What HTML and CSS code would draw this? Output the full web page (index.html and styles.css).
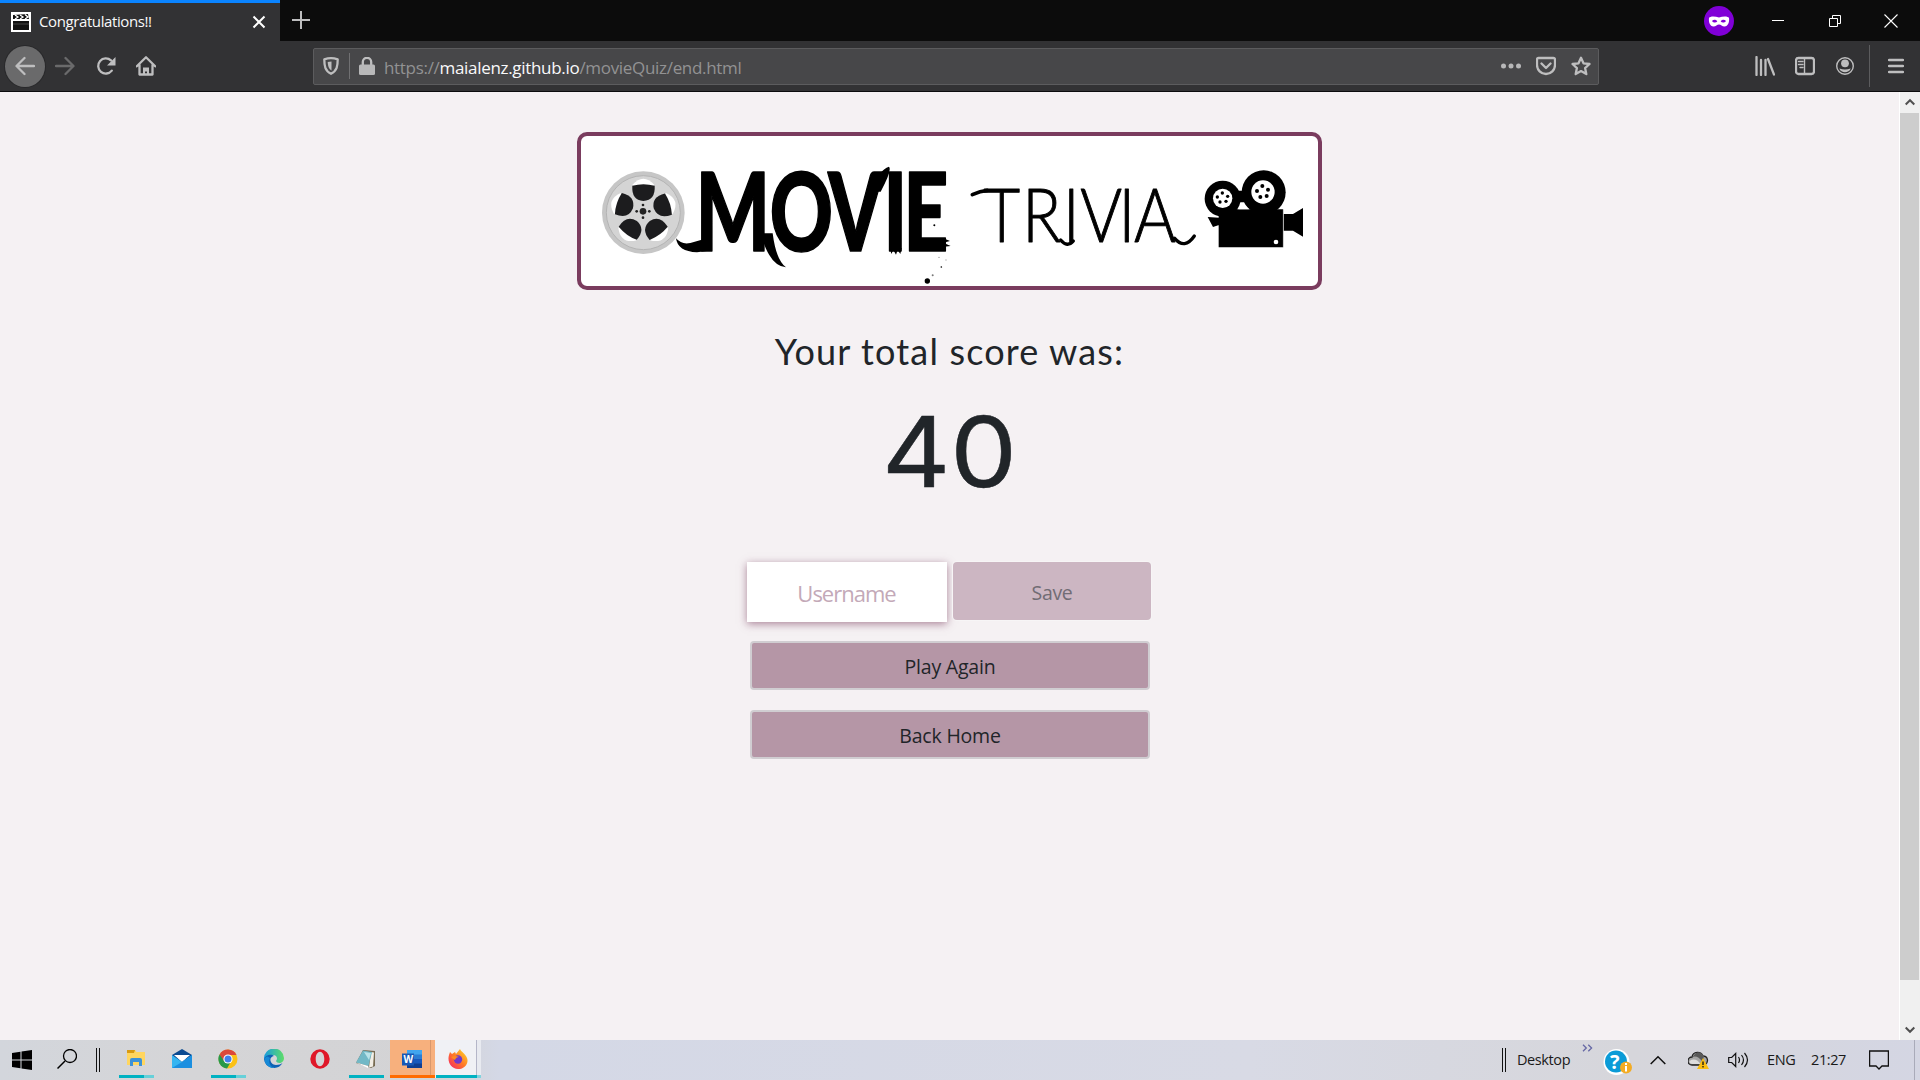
FILE: index.html
```html
<!DOCTYPE html>
<html lang="en">
<head>
<meta charset="utf-8">
<title>Congratulations!!</title>
<link rel="stylesheet" href="styles.css">
</head>
<body>
<header class="tabbar">
  <div class="tab">
    <svg class="favicon" width="20" height="20" viewBox="0 0 20 20"><rect width="20" height="20" fill="#fff"/><path d="M2 9h16v9H2zM2 3l15-1 1 5H2z" fill="#111"/><path d="M4 3l3 2-3 2M9 3l3 2-3 2M14 2.5l3 2.5-3 2" stroke="#fff" stroke-width="1.3" fill="none"/><path d="M2 12h16" stroke="#444"/></svg>
    <span class="tab-title">Congratulations!!</span>
    <svg class="tab-close" width="14" height="14" viewBox="0 0 14 14"><path d="M1.5 1.5l11 11M12.500 1.500l-11 11" stroke="#fff" stroke-width="2"/></svg>
  </div>
  <svg class="newtab" width="18" height="18" viewBox="0 0 18 18"><path d="M9 0v18M0 9h18" stroke="#bebebf" stroke-width="2"/></svg>
  <div class="window-controls">
    <svg width="30" height="30" viewBox="0 0 30 30"><circle cx="15" cy="15" r="15" fill="#8000d7"/><path fill-rule="evenodd" fill="#fff" d="M5 12c1-2 6-2 10-.4 4-1.600 9-1.600 10 .4.600 4-1 8.500-4.500 8.500-2.500 0-3.500-2-5.500-2s-3 2-5.500 2C6 20.500 4.400 16 5 12zm3 3c1.500 2 4 2 5.300.4-1.300-2-3.800-2-5.300-.4zm8.700.4c1.300 1.600 3.800 1.600 5.300-.4-1.500-1.600-4-1.600-5.300.4z"/></svg>
    <svg class="min" width="12" height="12" viewBox="0 0 12 12"><path d="M0 5.500h12" stroke="#fff"/></svg>
    <svg class="restore" width="12" height="12" viewBox="0 0 12 12"><path d="M.5 3.500h8v8h-8zM3.500 3.500v-3h8v8h-3" fill="none" stroke="#fff"/></svg>
    <svg class="close" width="14" height="14" viewBox="0 0 14 14"><path d="M.5.5l13 13M13.500.5l-13 13" stroke="#fff" stroke-width="1.100"/></svg>
  </div>
</header>
<nav class="toolbar">
  <div class="nav-buttons">
    <span class="nav-button back"><svg width="20" height="20" viewBox="0 0 20 20"><path d="M19 10H2M9.500 2L1.500 10l8 8" class="line"/></svg></span>
    <span class="nav-button forward"><svg width="20" height="20" viewBox="0 0 20 20"><path d="M1 10h17M10.500 2l8 8-8 8" class="line"/></svg></span>
    <span class="nav-button"><svg width="20" height="20" viewBox="0 0 20 20"><path d="M15.800 14.600A7.600 7.600 0 1 1 15 4.400" class="line"/><path d="M19.500 1v8.500H11z" fill="#bebebf"/></svg></span>
    <span class="nav-button"><svg width="20" height="20" viewBox="0 0 20 20"><path d="M.8 10.300L10 1.300l9.200 9M3.500 9v9.500h13V9" class="line"/><path d="M7 18v-6.500h6V18h-2v-2.500H9V18z" fill="#bebebf"/></svg></span>
  </div>
  <div class="urlbar">
    <svg width="16" height="18" viewBox="0 0 16 18"><path d="M8 1.200c2.500 0 4.500.4 6.700 1.100 0 6.500-.6 11.700-6.700 14.500C1.900 14 1.300 8.800 1.300 2.300 3.500 1.600 5.500 1.200 8 1.200z" class="line"/><path d="M8.500 4.500v9C5.500 11.500 5 9 4.700 5z" fill="#bebebf"/></svg>
    <i class="url-separator"></i>
    <svg width="16" height="18" viewBox="0 0 16 18"><path d="M3.800 9V5a4.200 4.200 0 0 1 8.400 0v4" class="line"/><rect y="7.500" width="16" height="10.500" rx="1.500" fill="#b8b8b9"/></svg>
    <span class="url">https://<b>maialenz.github.io</b>/movieQuiz/end.html</span>
    <div class="url-actions">
      <svg width="20" height="20" viewBox="0 0 20 20"><g fill="#b8b8b9"><circle cx="2.500" cy="10" r="2.500"/><circle cx="10" cy="10" r="2.500"/><circle cx="17.500" cy="10" r="2.500"/></g></svg>
      <svg width="20" height="20" viewBox="0 0 20 20"><path d="M2.500 2h15q1.500 0 1.500 1.500V9A9 9 0 0 1 1 9V3.500Q1 2 2.500 2zM5.500 7.500L10 12l4.500-4.500" class="line"/></svg>
      <svg width="20" height="20" viewBox="0 0 20 20"><path d="M10 1.800l2.500 5.500 6 .7-4.400 4.100 1.200 6-5.300-3-5.300 3 1.200-6L1.500 8l6-.7z" class="line"/></svg>
    </div>
  </div>
  <div class="tools">
    <svg width="20" height="20" viewBox="0 0 20 20"><path d="M1.500 1v18M6 4v15M10.500 4v15M13 3l6 15.500" class="line"/></svg>
    <svg width="20" height="20" viewBox="0 0 20 20"><rect x="1" y="2" width="18" height="16" rx="2.500" class="line"/><path d="M9.500 2v16" class="line thin"/><path d="M3.500 5.500H8M3.500 8.500H8M5 11.500h3" class="line thin"/></svg>
    <svg width="20" height="20" viewBox="0 0 20 20"><circle cx="10" cy="10" r="8.300" class="line thin"/><circle cx="10" cy="7.300" r="3.900" fill="#bebebf"/><path d="M4.300 12.500Q10 14.500 15.700 12.500C14 17.500 6 17.500 4.300 12.500z" fill="#bebebf"/></svg>
    <i class="tool-separator"></i>
    <svg width="16" height="20" viewBox="0 0 16 20"><path d="M1 4h14M1 10h14M1 16h14" class="line"/></svg>
  </div>
</nav>
<div class="viewport">
  <main class="page">
    <div class="logo">
      <svg width="737" height="150" viewBox="581 136 737 150" role="img">
        <g transform="translate(570 120) scale(.33333)">
          <circle cx="220" cy="278" r="124" fill="#c6c6c6"/><circle cx="220" cy="278" r="111" fill="#d4d4d4" stroke="#b4b4b4" stroke-width="3"/>
          <g id="holes">
            <g id="hole"><path d="M187 194q33-36 66 0l-10 18h-46z" fill="#fff"/><path d="M187 197q33-9 67 0 3 43-34 46-36-3-33-46z" fill="#1c1c1e"/></g>
            <use href="#hole" transform="rotate(72 220 276)"/><use href="#hole" transform="rotate(144 220 276)"/><use href="#hole" transform="rotate(216 220 276)"/><use href="#hole" transform="rotate(288 220 276)"/>
          </g>
          <g fill="#222"><circle cx="219" cy="274" r="10"/><circle cx="219" cy="255" r="4"/><circle cx="219" cy="293" r="4"/><circle cx="200" cy="274" r="4"/><circle cx="238" cy="274" r="4"/></g>
          <path d="M318 355q17 20 43 14l50-14 0 38-30 4q-58-2-63-42zM572 340l36 0q10 80 40 102-50-4-76-102zM893 215q35-65 64-75 10 10-25 75z"/>
          <text class="brush" transform="scale(.72 1)" x="524 832 1076 1306 1390" y="393">MOVIE</text>
          <path d="M1120 355l20 8-20 5 22 10-32 4zM960 385l4 17 6-12 8 14 5-14 8 12 4-18z"/>
          <g><circle cx="1072" cy="483" r="8"/><circle cx="1088" cy="466" r="3" fill="#777"/><circle cx="1114" cy="441" r="2.500"/><circle cx="1107" cy="412" r="2" fill="#888"/><circle cx="1093" cy="316" r="3"/><circle cx="1128" cy="420" r="2" fill="#aaa"/></g>
        </g>
        <g transform="translate(940 120) scale(.33333)">
          <path d="M97 224q24-11 45-13" fill="none" stroke="#000" stroke-width="11" stroke-linecap="round"/>
          <path d="M362 360q20 24 38 3M704 355q30 35 59-7" fill="none" stroke="#000" stroke-width="10" stroke-linecap="round"/>
          <text class="pen" transform="scale(.85 1)" x="153 290 434 495 630 685" y="367">TRIVIA</text>
          <circle cx="848" cy="236" r="54"/><circle cx="971" cy="217" r="66"/>
          <path d="M885 212h35v35h-35zM836 268h193v114H836zM803 291l34 2v22l-18 6zM1031 282h28l30-18v86l-30-18h-28z"/>
          <path d="M895 268l14-18 18 18z" fill="#fff"/>
          <path d="M1030 268v114" stroke="#aaa" stroke-width="2"/>
          <circle cx="848" cy="235" r="29" fill="#fff"/><circle cx="969" cy="216" r="35" fill="#fff"/><circle cx="1008" cy="366" r="7" fill="#fff"/>
          <circle cx="847" cy="219" r="5"/><circle cx="863" cy="229" r="5"/><circle cx="858" cy="244" r="5"/><circle cx="840" cy="246" r="5"/><circle cx="832" cy="231" r="5"/>
          <circle cx="967" cy="198" r="6"/><circle cx="984" cy="209" r="6"/><circle cx="980" cy="228" r="6"/><circle cx="961" cy="231" r="6"/><circle cx="951" cy="213" r="6"/>
        </g>
      </svg>
    </div>
    <h1 class="heading">Your total score was:</h1>
    <div class="score">40</div>
    <form class="score-form">
      <div class="save-row">
        <div class="username">Username</div>
        <div class="save">Save</div>
      </div>
      <div class="button again">Play Again</div>
      <div class="button home">Back Home</div>
    </form>
  </main>
  <div class="scrollbar">
    <svg width="10" height="8" viewBox="0 0 10 8"><path d="M.7 6.500L5 2.200l4.300 4.300" fill="none" stroke="#505050" stroke-width="2"/></svg>
    <i class="thumb"></i>
    <svg width="10" height="8" viewBox="0 0 10 8"><path d="M.7 1.500L5 5.800l4.300-4.300" fill="none" stroke="#505050" stroke-width="2"/></svg>
  </div>
</div>
<footer class="taskbar">
  <span class="cell start"><svg width="20" height="20" viewBox="0 0 20 20"><path d="M0 3l8.500-1.200v7.700H0zM9.500 1.600L20 0v9.500H9.500zM0 10.500h8.500v7.700L0 17zM9.500 10.500H20V20L9.500 18.400z"/></svg></span>
  <span class="cell"><svg width="20" height="20" viewBox="0 0 20 20"><path d="M8 12L.5 19.500" stroke="#000" stroke-width="1.500"/><circle cx="13" cy="7" r="6.500" fill="none" stroke="#000" stroke-width="1.300"/></svg></span>
  <i class="grip"></i>
  <div class="apps">
    <span class="cell running stacked"><svg width="20" height="20" viewBox="0 0 20 20"><path d="M1 1h8l1.500 2H19v13H1z" fill="#ffd660"/><path d="M1 1h8l-1 3H1z" fill="#d99b12"/><path d="M4 17v-6q0-2 2-2h8q2 0 2 2v6h-3v-4H7v4z" fill="#3c91d8"/></svg></span>
    <span class="cell"><svg width="20" height="20" viewBox="0 0 20 20"><path d="M0 6l10-6 10 6v13H0z" fill="#0a4a91"/><path d="M2 6h16l-8 7z" fill="#fff"/><path d="M0 6l10 7 10-7v13H0z" fill="#35b5f1"/><path d="M0 19l10-6 10-7v13z" fill="#1b8fe0"/></svg></span>
    <span class="cell running stacked"><svg width="20" height="20" viewBox="0 0 20 20"><circle cx="10" cy="10" r="9.500" fill="#fbc116"/><path d="M10 10L1.500 5.500A9.500 9.500 0 0 0 9 19.500l4-7z" fill="#26994a"/><path d="M1.600 5.500A9.500 9.500 0 0 1 18.500 6H10l-4 6z" fill="#dc483c"/><circle cx="10" cy="10" r="4.600" fill="#fff"/><circle cx="10" cy="10" r="3.500" fill="#427fed"/></svg></span>
    <span class="cell"><svg width="20" height="20" viewBox="0 0 20 20"><defs><linearGradient id="edge"><stop stop-color="#189be0"/><stop offset="1" stop-color="#5fdd67"/></linearGradient></defs><path d="M0 10A10 10 0 0 1 20 9c0 6-7 6-8 3 2-2 1-6-3-6-4 0-6 2-9 4z" fill="url(#edge)"/><path d="M0 10c2-5 8-5 10-3-6 1-4 9 2 9 3 0 5-1 6.500-2A10 10 0 0 1 0 10z" fill="#0d63b5"/><path d="M6 9c-2 4 0 9 5 10-6 1-12-5-10-10q2-3 5 0z" fill="#1689d6"/></svg></span>
    <span class="cell"><svg width="20" height="20" viewBox="0 0 20 20"><path fill="#df1829" fill-rule="evenodd" d="M10 .3a9.700 9.700 0 1 0 0 19.400A9.700 9.700 0 1 0 10 .3zm0 2.500c2.300 0 4.300 3 4.300 7.200s-2 7.200-4.300 7.200S5.700 14.200 5.700 10 7.700 2.800 10 2.800z"/></svg></span>
    <span class="cell running"><svg width="20" height="20" viewBox="0 0 20 20"><path d="M7 1l12 1v15l-4 2L0 14z" fill="#776b52"/><path d="M15 3l3 .5-1 14-4 1z" fill="#f2eee5"/><path d="M7 1.500L16 3l-3.500 14L0 13.500z" fill="#72b8c6"/><path d="M8 3l7 1-2 7z" fill="#b9e2e8"/><path d="M0 13.500L12.500 17l-.5 2z" fill="#fff"/></svg></span>
    <span class="cell word"><svg width="20" height="20" viewBox="0 0 20 20"><path d="M5 1h15v5H5z" fill="#41a5ee"/><path d="M5 5.500h15V10H5z" fill="#2b7cd3"/><path d="M5 10h15v5H5z" fill="#185abd"/><path d="M5 14.500h15V19H5z" fill="#103f91"/><path d="M0 4.500h12v12H0z" fill="#1858b5"/><text x="1.500" y="14" class="word-mark" textLength="9">W</text></svg></span>
    <span class="cell running stacked firefox"><svg width="20" height="20" viewBox="0 0 20 20"><defs><linearGradient id="fire" x1="1" y1="0" x2="0" y2="1"><stop stop-color="#ffe226"/><stop offset=".5" stop-color="#ff7a27"/><stop offset="1" stop-color="#f51c6b"/></linearGradient></defs><path d="M1 6l1-3 2 2 3-2 1 2 4-5c1 3 5 4 7 9 2 5-2 11-9 11S-1 13 1 6z" fill="url(#fire)"/><circle cx="10" cy="10.500" r="4.200" fill="#7139c9"/><path d="M3 8q4-2 8 0-3 0-4 3-2-1-4-3z" fill="#ff8a1d"/></svg></span>
  </div>
  <div class="tray">
    <i class="grip"></i>
    <span class="label desktop">Desktop</span>
    <svg class="more" width="11" height="8" viewBox="0 0 11 8"><path d="M1 .7L4.300 4 1 7.300M6.300.7L9.600 4 6.300 7.300" fill="none" stroke="#6668a5" stroke-width="1.300"/></svg>
    <svg class="help" width="30" height="28" viewBox="0 0 30 28"><circle cx="13.500" cy="14" r="13" fill="#fff"/><circle cx="13" cy="13.500" r="11" fill="#0b9bd7"/><text x="7" y="21" class="help-mark">?</text><circle cx="23" cy="19.500" r="6" fill="#f3ac24"/><path d="M23 18v5.500M23 15v2" stroke="#fff" stroke-width="2"/></svg>
    <svg class="chevron" width="16" height="10" viewBox="0 0 16 10"><path d="M.7 9L8 1.700 15.300 9" fill="none" stroke="#111" stroke-width="1.500"/></svg>
    <svg class="cloud" width="21" height="20" viewBox="0 0 21 20"><path d="M4 15a4 4 0 0 1 0-8c1-6 9-6 11-1 5 0 6 6 2 9z" fill="#a5a5a5" stroke="#222" stroke-width="1.300"/><path d="M4.500 7q5-2 10 5L16 6Q10-2 4.500 7z" fill="#595959"/><path d="M1.500 11q6-4 11 3H4q-3-1-2.500-3z" fill="#ddd"/><path d="M15 8l6 11H9z" fill="#fbbd10"/><path d="M15 11.500V15M15 16v1.500" stroke="#111" stroke-width="1.300"/></svg>
    <svg class="speaker" width="21" height="18" viewBox="0 0 21 18"><path d="M.7 6.500h3l4-4v13l-4-4h-3zM10.500 6q2 3 0 6M13.500 4q4 5 0 10M16.500 2q6 7 0 14" fill="none" stroke="#111" stroke-width="1.200"/></svg>
    <span class="label lang">ENG</span>
    <span class="label clock">21:27</span>
    <svg class="notify" width="20" height="20" viewBox="0 0 20 20"><path d="M.6 1h18.800v15H13l-3 3-3-3H.6z" fill="none" stroke="#111" stroke-width="1.300"/></svg>
    <i class="show-desktop"></i>
  </div>
</footer>
</body>
</html>
```

FILE: styles.css
```css
* { box-sizing: border-box; }
body {
  margin: 0;
  width: 1920px;
  height: 1080px;
  overflow: hidden;
  display: flex;
  flex-direction: column;
  font-family: "Open Sans", "Noto Sans", sans-serif;
  background: #f5f1f3;
}
svg { display: block; flex: none; }
.line { fill: none; stroke: #bebebf; stroke-width: 2.3; stroke-linecap: round; stroke-linejoin: round; }
.thin { stroke-width: 1.4; }

.tabbar { height: 41px; flex: none; display: flex; background: #0c0c0c; }
.tab { width: 280px; height: 41px; border-top: 3px solid #0a84ff; background: #323234; display: flex; align-items: center; padding: 0 14px 1px 11px; }
.tab-title { margin: -2px 0 0 8px; font-size: 15px; letter-spacing: -0.4px; color: #f9f9fa; white-space: nowrap; }
.tab-close { margin-left: auto; }
.newtab { margin: 11px 0 0 12px; }
.window-controls { margin-left: auto; display: flex; align-items: center; height: 41px; padding-right: 22px; }
.min { margin-left: 38px; }
.restore { margin-left: 45px; }
.close { margin-left: 43px; }

.toolbar { height: 51px; flex: none; display: flex; align-items: center; background: #323234; border-bottom: 1px solid #0c0c0d; padding-left: 5px; }
.nav-buttons { display: flex; width: 308px; gap: 0.4px; }
.nav-button { width: 40px; height: 41px; display: flex; align-items: center; justify-content: center; }
.back { background: #6a6a6b; border-radius: 50%; box-shadow: 0 0 0 1px #29292b; }
.forward { opacity: .4; }
.urlbar { width: 1286px; height: 37px; border: 1px solid #5c5c5e; border-radius: 2px; background: #474749; display: flex; align-items: center; padding: 0 7px 0 9px; }
.url-separator { width: 1px; height: 26px; margin: 0 9px 0 10px; background: #707072; }
.url { margin: 2px 0 0 9px; font-size: 17px; letter-spacing: -0.31px; color: #929293; white-space: nowrap; }
.url b { font-weight: 400; color: #f9f9fa; }
.url-actions { margin-left: auto; display: flex; gap: 15px; }
.tools { margin-left: auto; display: flex; align-items: center; gap: 20px; padding-right: 16px; }
.tool-separator { width: 1px; height: 42px; margin-left: -6px; margin-right: -2px; background: #5c5c5e; }

.viewport { flex: 1; min-height: 0; display: flex; }
.page { flex: 1; display: flex; flex-direction: column; align-items: center; padding-top: 40px; background: #f5f1f3; }
.logo { width: 745px; height: 158px; border: 4px solid #7a3c5e; border-radius: 10px; background: #fff; overflow: hidden; }
.brush { font: 900 325px Lato, sans-serif; stroke: #000; stroke-width: 5; stroke-linejoin: round; }
.pen { font: 300 225px Lato, sans-serif; stroke: #000; stroke-width: 3; stroke-linejoin: round; }
.heading { margin: 39px 0 0; font: 400 36px/44px Lato, sans-serif; letter-spacing: 1.15px; color: #212529; white-space: nowrap; }
.score { margin-top: 18px; font: 400 98px/122px Inter, sans-serif; color: #212529; -webkit-text-stroke: 0.5px #212529; transform: scaleX(1.08); }
.score-form { margin-top: 49px; margin-right: 2px; width: 404px; display: flex; flex-direction: column; align-items: center; }
.save-row { width: 404px; display: flex; justify-content: space-between; align-items: flex-start; }
.username { width: 200px; height: 60px; background: #fff; box-shadow: 0 2px 8px rgba(122, 60, 94, .6); color: #c3a9b8; font-size: 22px; line-height: 62px; text-align: center; letter-spacing: -1px; }
.save { width: 198px; height: 58px; border-radius: 4px; background: #ccb6c2; color: #716c74; font-size: 19.500px; line-height: 62px; text-align: center; letter-spacing: -0.3px; box-shadow: 0 0 0 1px #f7f5f6; padding-left: 1px; }
.button { width: 400px; height: 49px; margin-left: 3px; border: 2px solid #d0cdd1; border-radius: 4px; background: #b596a6; color: #212529; font-size: 19.500px; line-height: 48px; text-align: center; letter-spacing: -0.2px; }
.again { margin-top: 19px; }
.home { margin-top: 20px; }
.scrollbar { width: 21px; background: #f0f0f0; border-left: 1px solid #fff; display: flex; flex-direction: column; align-items: center; justify-content: space-between; padding: 6px 1px 6px 0; }
.thumb { width: 19px; height: 867px; margin-top: 7px; margin-bottom: auto; background: #cdcdcd; }

.taskbar { height: 40px; flex: none; display: flex; background: linear-gradient(90deg, #d3d6dc 0, #d5d5d7 10%, #d3d3d5 23%, #d4d8e6 26%, #d8dae5 65%, #d6d6db 85%, #d4d6e3); }
.cell { width: 46px; height: 40px; display: flex; align-items: center; justify-content: center; flex: none; padding-bottom: 2px; }
.start { width: 44px; padding-bottom: 0; }
.grip { width: 4px; height: 24px; border: solid #111; border-width: 0 1px; margin: 8px 0 0 6px; flex: none; }
.apps { display: flex; margin-left: 13px; }
.running { background: linear-gradient(#00b2c2, #00b2c2) 6px 35px / 35px 3px no-repeat; }
.stacked { background: linear-gradient(90deg, #00b2c2 25px, #66d0d9 25px) 6px 35px / 35px 3px no-repeat; }
.word { background: linear-gradient(#ff6b00, #ff6b00) 0 35px / 45px 3px no-repeat, linear-gradient(90deg, #f7b07d 40px, #d9986c 40px 41px, #f7b07d 41px) 0 0 / 45px 38px no-repeat; margin-left: 1px; width: 45px; padding-right: 1px; }
.firefox { background: linear-gradient(90deg, #00b2c2 41px, #80d3de 41px) 1px 35px / 45px 3px no-repeat, linear-gradient(90deg, #f0f1f5 41px, #b4b6c8 41px 42px, #e8eaf0 42px) 0 0 / 46px 38px no-repeat; }
.word-mark { font: 700 10px "Open Sans", sans-serif; fill: #fff; }
.tray { margin-left: auto; display: flex; align-items: center; height: 40px; }
.tray .grip { margin: 0; }
.label { font-size: 14.500px; color: #1a1a1a; white-space: nowrap; letter-spacing: -0.4px; margin-top: -1px; }
.desktop { margin-left: 11px; width: 54px; }
.more { margin: -24px 0 0 11px; }
.help { margin: 3px 0 0 10px; }
.chevron { margin-left: 17px; }
.cloud { margin-left: 22px; }
.speaker { margin-left: 19px; }
.lang { margin-left: 18px; width: 28px; }
.clock { margin-left: 16px; width: 34px; }
.notify { margin-left: 24px; }
.show-desktop { width: 1px; height: 40px; margin: 0 5px 0 25px; background: #a9abb9; }
.help-mark { font: 700 20px "Open Sans", sans-serif; fill: #fff; }
```
